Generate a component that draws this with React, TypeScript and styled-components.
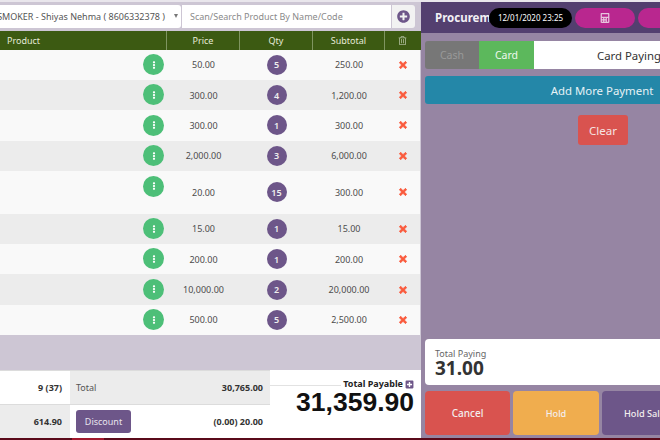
import React from "react";
import styled, { createGlobalStyle } from "styled-components";
import {
  FaCalculator,
  FaEllipsisV,
  FaPlusCircle,
  FaPlusSquare,
  FaRegTrashAlt,
  FaTimes,
} from "react-icons/fa";

const GlobalStyle = createGlobalStyle`
  html, body {
    margin: 0;
    padding: 0;
    background: #e9e6ec;
  }
  * {
    box-sizing: border-box;
  }
`;

const Page = styled.div`
  width: 660px;
  height: 440px;
  overflow: hidden;
  display: flex;
  flex-direction: column;
  font-family: "Noto Sans", sans-serif;
  font-size: 9px;
  color: #444;
`;

const Main = styled.div`
  flex: 1;
  min-height: 0;
  display: flex;
  padding-top: 2px;
`;

const LeftColumn = styled.div`
  width: 421px;
  flex-shrink: 0;
  display: flex;
  flex-direction: column;
  background: #cdc6d4;
`;

const SearchBar = styled.div`
  height: 28.5px;
  padding: 3px 0 3px 0;
  display: flex;
  gap: 1px;
`;

const CustomerSelect = styled.div`
  width: 181px;
  background: #fff;
  display: flex;
  align-items: center;
  justify-content: flex-end;
  overflow: hidden;
  white-space: nowrap;
  padding-right: 3px;
  color: #555;
  border-radius: 0 3px 3px 0;
`;

const Caret = styled.span`
  width: 0;
  height: 0;
  margin-left: 9px;
  flex-shrink: 0;
  border-left: 2.5px solid transparent;
  border-right: 2.5px solid transparent;
  border-top: 4px solid #777;
`;

const SearchInput = styled.div`
  width: 209px;
  background: #fff;
  padding-left: 8px;
  display: flex;
  align-items: center;
  color: #8a8a8a;
  white-space: nowrap;
  overflow: hidden;
`;

const SearchAdd = styled.div`
  width: 23px;
  background: #f2f2f2;
  color: #6d5689;
  font-size: 13px;
  display: flex;
  align-items: center;
  justify-content: center;
  border-radius: 0 3px 3px 0;
`;

const TableHead = styled.div`
  display: grid;
  grid-template-columns: 167px 73px 73px 72px 35px;
  height: 19px;
  background: #3c5a12;
  color: #e6ead8;
`;

const HeadCell = styled.div<{ $left?: boolean }>`
  display: flex;
  align-items: center;
  justify-content: ${(p) => (p.$left ? "flex-start" : "center")};
  padding-left: ${(p) => (p.$left ? "7px" : "0")};
  border-right: 1px solid #7f9560;
  &:last-child {
    border-right: 0;
    color: #a9b795;
  }
`;

const Row = styled.div<{ $tall?: boolean; $alt?: boolean }>`
  display: grid;
  grid-template-columns: 167px 73px 73px 72px 35px;
  height: ${(p) => (p.$tall ? "42.5px" : "30.4px")};
  background: ${(p) => (p.$alt ? "#ececec" : "#f9f9f9")};
  width: 420px;
`;

const ProductCell = styled.div`
  display: flex;
  justify-content: flex-end;
  align-items: flex-start;
  padding: 4.5px 3px 0 0;
`;

const Cell = styled.div`
  display: flex;
  align-items: center;
  justify-content: center;
  color: #4c4c4c;
`;

const MenuButton = styled.span`
  width: 21px;
  height: 21px;
  border-radius: 50%;
  background: #4dbf78;
  color: #fff;
  font-size: 8px;
  display: flex;
  align-items: center;
  justify-content: center;
`;

const QtyBadge = styled.span`
  width: 20px;
  height: 20px;
  border-radius: 50%;
  background: #6d5689;
  color: #eee;
  font-weight: 600;
  display: flex;
  align-items: center;
  justify-content: center;
`;

const RemoveIcon = styled(FaTimes)`
  color: #fa5a3c;
  font-size: 10px;
  stroke: #fa5a3c;
  stroke-width: 50px;
`;

const Summary = styled.div`
  margin-top: auto;
  height: 68px;
  display: flex;
  background: #fff;
`;

const Totals = styled.div`
  width: 270px;
  flex-shrink: 0;
  display: grid;
  grid-template-columns: 70px 200px;
  grid-template-rows: 34px 34px;
`;

const CountCell = styled.div<{ $alt?: boolean }>`
  background: ${(p) => (p.$alt ? "#ececec" : "#fff")};
  border-top: 1px solid #dcdcdc;
  display: flex;
  align-items: center;
  justify-content: flex-end;
  padding-right: 8px;
  font-weight: 700;
  color: #333;
`;

const AmountCell = styled.div<{ $alt?: boolean }>`
  background: ${(p) => (p.$alt ? "#ececec" : "#fff")};
  border-top: 1px solid #dcdcdc;
  display: flex;
  align-items: center;
  justify-content: space-between;
  padding: 0 7px 0 6px;
  color: #555;
`;

const Strong = styled.span`
  font-weight: 700;
  color: #333;
`;

const DiscountButton = styled.span`
  width: 55px;
  height: 23px;
  border-radius: 3px;
  background: #6d5689;
  color: #e8e4ee;
  display: flex;
  align-items: center;
  justify-content: center;
`;

const Payable = styled.div`
  flex: 1;
  text-align: right;
  padding: 8px 7px 0 0;
  display: flex;
  flex-direction: column;
  align-items: flex-end;
  position: relative;
  &::before {
    content: "";
    position: absolute;
    left: 0;
    right: 80px;
    top: 15px;
    border-top: 1px solid #e2e2e2;
  }
`;

const PayableLabel = styled.div`
  display: flex;
  align-items: center;
  gap: 2px;
  font-weight: 700;
  line-height: 12px;
  color: #222;
  svg {
    color: #6d5689;
    font-size: 9px;
  }
`;

const PayableAmount = styled.div`
  font-family: "Liberation Sans", sans-serif;
  font-weight: 700;
  font-size: 26.5px;
  line-height: 24px;
  color: #111;
`;

const RightPanel = styled.div`
  width: 239px;
  flex-shrink: 0;
  background: #9685a3;
  overflow: hidden;
  display: flex;
  flex-direction: column;
`;

const PanelHeader = styled.div`
  height: 31px;
  width: 320px;
  flex-shrink: 0;
  background: #533f6f;
  display: flex;
  align-items: center;
  padding-left: 14px;
`;

const Title = styled.div`
  width: 54px;
  overflow: hidden;
  white-space: nowrap;
  color: #f2f0f5;
  font-weight: 700;
  font-size: 11.5px;
  flex-shrink: 0;
`;

const Clock = styled.div`
  width: 83px;
  height: 20px;
  border-radius: 10px;
  background: #000;
  color: #fff;
  font-size: 8px;
  display: flex;
  align-items: center;
  justify-content: center;
  flex-shrink: 0;
`;

const PillButton = styled.div`
  width: 60px;
  height: 20px;
  margin-left: 3px;
  border-radius: 10px;
  background: #b9278f;
  color: #e7c5dd;
  font-size: 10px;
  display: flex;
  align-items: center;
  justify-content: center;
  flex-shrink: 0;
`;

const PanelBody = styled.div`
  flex: 1;
  width: 360px;
  padding: 8px 0 0 4px;
  display: flex;
  flex-direction: column;
`;

const PaymentRow = styled.div`
  height: 28px;
  display: flex;
`;

const CashTab = styled.div`
  width: 54px;
  background: #777;
  color: #999;
  font-size: 10.5px;
  border-radius: 3px 0 0 3px;
  display: flex;
  align-items: center;
  justify-content: center;
`;

const CardTab = styled.div`
  width: 55px;
  background: #5cb85c;
  color: #eef8ee;
  font-size: 10.5px;
  display: flex;
  align-items: center;
  justify-content: center;
`;

const PayingInput = styled.div`
  width: 190px;
  background: #fff;
  color: #333;
  font-size: 11.4px;
  display: flex;
  align-items: center;
  justify-content: center;
`;

const AddPayment = styled.div`
  height: 28px;
  margin-top: 7px;
  border-radius: 3px;
  background: #2487a8;
  color: #e6f2f6;
  font-size: 11.4px;
  display: flex;
  align-items: center;
  justify-content: center;
  padding-right: 2px;
`;

const ClearButton = styled.div`
  width: 50px;
  height: 30px;
  margin: 11px auto 0;
  border-radius: 3px;
  background: #d9534f;
  color: #f6e4e3;
  font-size: 11.5px;
  display: flex;
  align-items: center;
  justify-content: center;
`;

const PayingBox = styled.div`
  margin-top: auto;
  height: 46px;
  border-radius: 4px;
  background: #fff;
  padding: 9px 0 0 10px;
`;

const PayingLabel = styled.div`
  line-height: 11px;
  color: #666;
`;

const PayingValue = styled.div`
  font-size: 19px;
  line-height: 19px;
  font-weight: 700;
  color: #333;
`;

const Actions = styled.div`
  margin-top: 6px;
  height: 44px;
  margin-bottom: 3px;
  display: grid;
  grid-template-columns: 85px 86px 85px;
  gap: 3px;
`;

const ActionButton = styled.div<{ $color: string; $large?: boolean }>`
  border-radius: 4px;
  background: ${(p) => p.$color};
  color: #f3eeee;
  font-size: ${(p) => (p.$large ? "10px" : "9.2px")};
  font-weight: 500;
  display: flex;
  align-items: center;
  justify-content: center;
  white-space: nowrap;
`;

const StatusStrip = styled.div`
  height: 2px;
  flex-shrink: 0;
  background: #5a0a1a;
  display: flex;
  padding-left: 72px;
`;

const StatusActive = styled.span`
  width: 32px;
  background: #a0182c;
`;

const rows = [
  { price: "50.00", qty: 5, subtotal: "250.00" },
  { price: "300.00", qty: 4, subtotal: "1,200.00" },
  { price: "300.00", qty: 1, subtotal: "300.00" },
  { price: "2,000.00", qty: 3, subtotal: "6,000.00" },
  { price: "20.00", qty: 15, subtotal: "300.00", tall: true },
  { price: "15.00", qty: 1, subtotal: "15.00" },
  { price: "200.00", qty: 1, subtotal: "200.00" },
  { price: "10,000.00", qty: 2, subtotal: "20,000.00" },
  { price: "500.00", qty: 5, subtotal: "2,500.00" },
];

export default function App() {
  return (
    <Page>
      <GlobalStyle />
      <Main>
        <LeftColumn>
          <SearchBar>
            <CustomerSelect>
              SMOKER - Shiyas Nehma ( 8606332378 )
              <Caret />
            </CustomerSelect>
            <SearchInput>Scan/Search Product By Name/Code</SearchInput>
            <SearchAdd>
              <FaPlusCircle />
            </SearchAdd>
          </SearchBar>
          <TableHead>
            <HeadCell $left>Product</HeadCell>
            <HeadCell>Price</HeadCell>
            <HeadCell>Qty</HeadCell>
            <HeadCell>Subtotal</HeadCell>
            <HeadCell>
              <FaRegTrashAlt />
            </HeadCell>
          </TableHead>
          {rows.map((row, i) => (
            <Row key={i} $tall={row.tall} $alt={i % 2 === 1}>
              <ProductCell>
                <MenuButton>
                  <FaEllipsisV />
                </MenuButton>
              </ProductCell>
              <Cell>{row.price}</Cell>
              <Cell>
                <QtyBadge>{row.qty}</QtyBadge>
              </Cell>
              <Cell>{row.subtotal}</Cell>
              <Cell>
                <RemoveIcon />
              </Cell>
            </Row>
          ))}
          <Summary>
            <Totals>
              <CountCell>9 (37)</CountCell>
              <AmountCell $alt>
                Total
                <Strong>30,765.00</Strong>
              </AmountCell>
              <CountCell $alt>614.90</CountCell>
              <AmountCell>
                <DiscountButton>Discount</DiscountButton>
                <Strong>(0.00) 20.00</Strong>
              </AmountCell>
            </Totals>
            <Payable>
              <PayableLabel>
                Total Payable
                <FaPlusSquare />
              </PayableLabel>
              <PayableAmount>31,359.90</PayableAmount>
            </Payable>
          </Summary>
        </LeftColumn>
        <RightPanel>
          <PanelHeader>
            <Title>Procurement</Title>
            <Clock>12/01/2020 23:25</Clock>
            <PillButton>
              <FaCalculator />
            </PillButton>
            <PillButton />
          </PanelHeader>
          <PanelBody>
            <PaymentRow>
              <CashTab>Cash</CashTab>
              <CardTab>Card</CardTab>
              <PayingInput>Card Paying</PayingInput>
            </PaymentRow>
            <AddPayment>Add More Payment</AddPayment>
            <ClearButton>Clear</ClearButton>
            <PayingBox>
              <PayingLabel>Total Paying</PayingLabel>
              <PayingValue>31.00</PayingValue>
            </PayingBox>
            <Actions>
              <ActionButton $color="#d9534f" $large>
                Cancel
              </ActionButton>
              <ActionButton $color="#f0ad4e">Hold</ActionButton>
              <ActionButton $color="#6d5689">Hold Sale</ActionButton>
            </Actions>
          </PanelBody>
        </RightPanel>
      </Main>
      <StatusStrip>
        <StatusActive />
      </StatusStrip>
    </Page>
  );
}
